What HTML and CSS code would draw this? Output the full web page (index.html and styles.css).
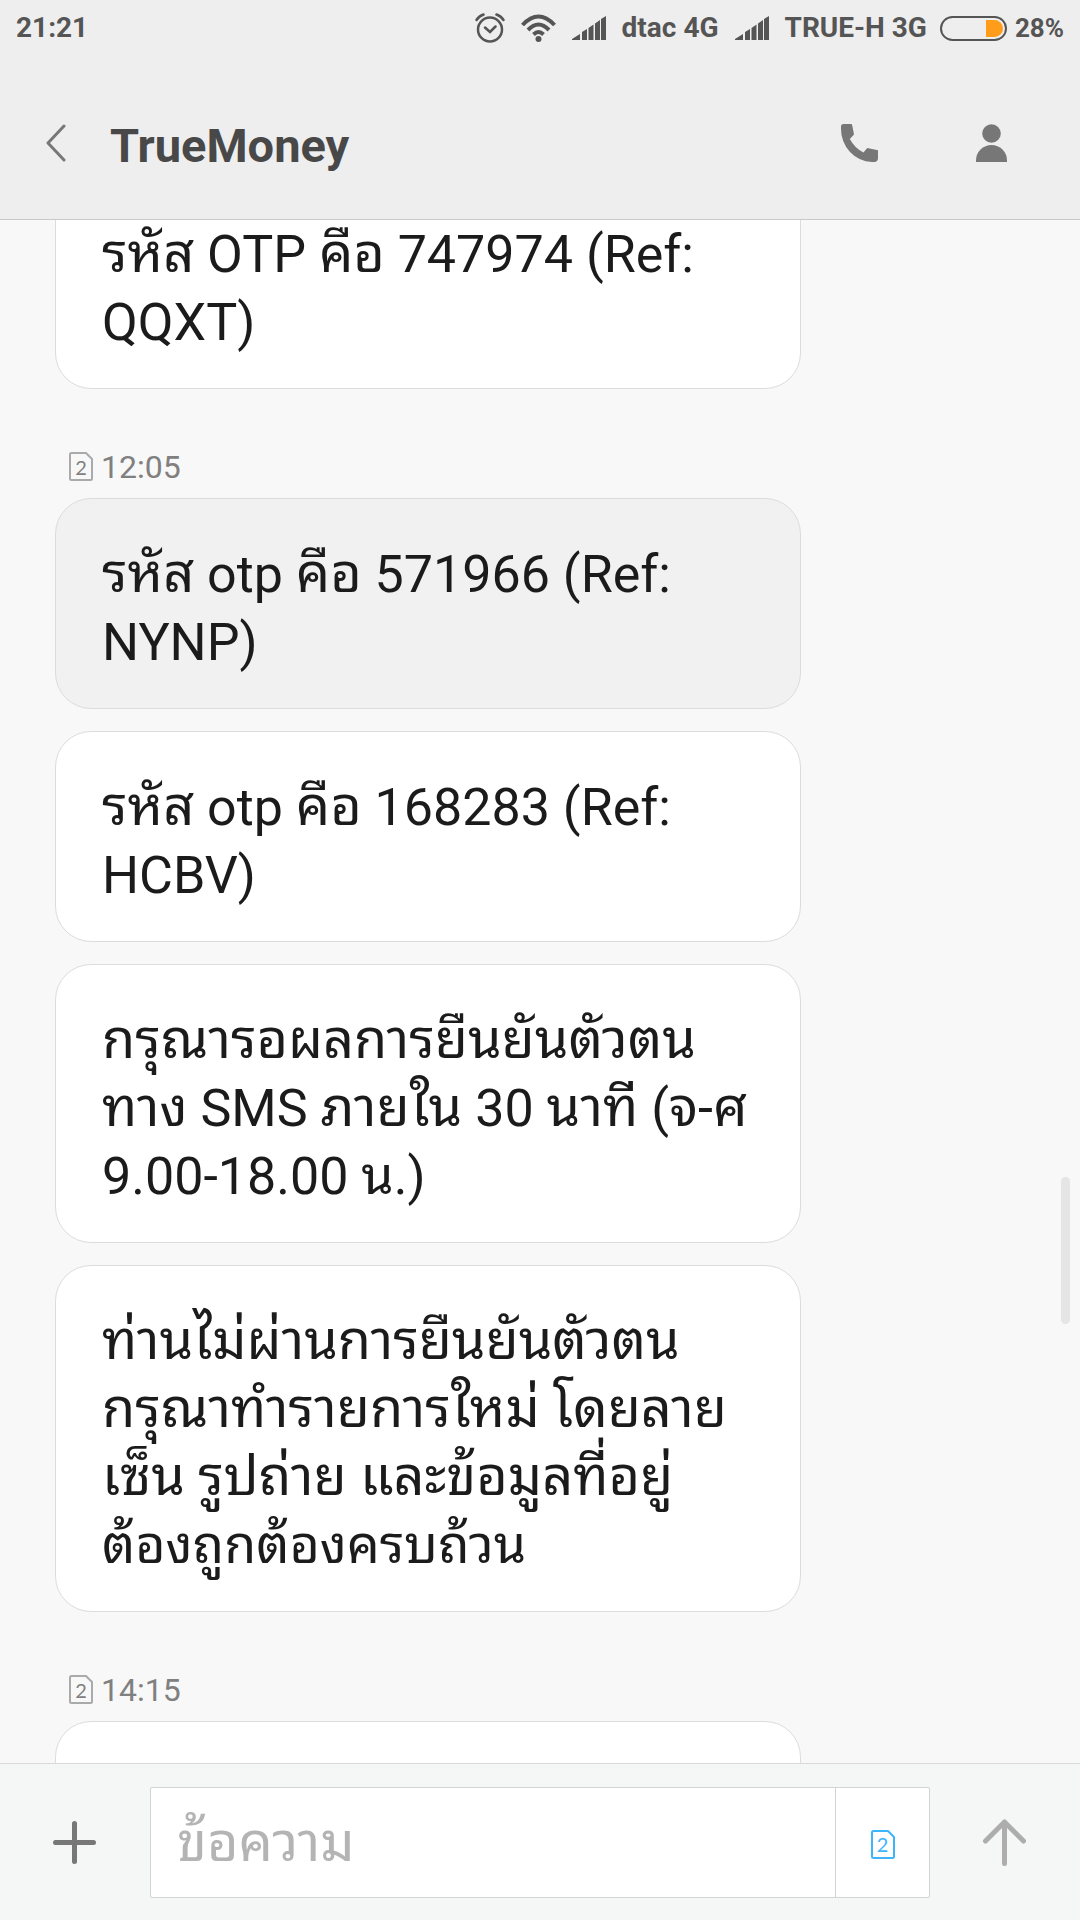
FILE: index.html
```html
<!DOCTYPE html>
<html lang="th">
<head>
<meta charset="utf-8">
<meta name="viewport" content="width=device-width, initial-scale=1">
<title>TrueMoney</title>
<link rel="stylesheet" href="styles.css">
</head>
<body>
<svg class="defs" aria-hidden="true">
  <symbol id="sim" viewBox="0 0 24 29">
    <path d="M2.500 1H17L23 7V26.500Q23 28 21.500 28H2.500Q1 28 1 26.500V2.500Q1 1 2.500 1Z" fill="none" stroke="currentColor" stroke-width="2" stroke-linejoin="round"/>
  </symbol>
  <symbol id="signal" viewBox="0 0 34 24">
    <path d="M0 24V23L8 18V24ZM10 16L15 13V24H10ZM16.500 12L21.500 8.500V24H16.500ZM23 7.500L28 4V24H23ZM29 3L34 0V24H29Z" fill="currentColor"/>
  </symbol>
</svg>
<div class="screen">
  <header class="top">
    <div class="status">
      <time class="clock">21:21</time>
      <svg class="alarm" viewBox="0 0 30 30" fill="none" stroke="currentColor" stroke-width="2.500" stroke-linecap="round">
        <circle cx="15" cy="16.500" r="12"/>
        <path d="M10 14.500L15 19L20.500 13.500M1.500 7Q4 3 8.500 1.500M28.500 7Q26 3 21.500 1.500"/>
      </svg>
      <svg class="wifi" viewBox="0 0 35 28" fill="none" stroke="currentColor" stroke-width="4">
        <path d="M1.500 11Q17.500 -6 33.500 11M7 16Q17.500 5 28 16M12.500 20.500Q17.500 15.500 22.500 20.500"/>
        <circle cx="17.500" cy="25" r="3" fill="currentColor" stroke="none"/>
      </svg>
      <svg class="signal"><use href="#signal"/></svg>
      <span>dtac 4G</span>
      <svg class="signal"><use href="#signal"/></svg>
      <span>TRUE-H 3G</span>
      <svg class="battery" viewBox="0 0 67 25">
        <rect x="1" y="1" width="65" height="23" rx="11.500" fill="none" stroke="currentColor" stroke-width="2"/>
        <path d="M46 4H54.500A8.500 8.500 0 0 1 54.500 21H46Z" fill="#ff9d1b"/>
      </svg>
      <span class="percent">28%</span>
    </div>
    <div class="titlebar">
      <button class="icon-btn back" aria-label="Back">
        <svg width="20" height="38" viewBox="0 0 20 38" fill="none" stroke="currentColor" stroke-width="3" stroke-linecap="round" stroke-linejoin="round"><path d="M18 2L2 19L18 36"/></svg>
      </button>
      <h1 class="title">TrueMoney</h1>
      <button class="icon-btn call" aria-label="Call">
        <svg width="37" height="38" viewBox="0 0 37 38" fill="currentColor"><path d="M2.500 0H10Q11 0 11.200 1.200L13 10.500L8.800 15Q14 24.500 22.500 28.500L26.200 24L37 26.200V34Q37 37 34 38H31Q18 37.500 9 28Q0 18 0 5V2.500Q0 0 2.500 0Z"/></svg>
      </button>
      <button class="icon-btn contact" aria-label="Contact">
        <svg width="31" height="38" viewBox="0 0 31 38" fill="currentColor"><circle cx="15.500" cy="9.500" r="9.300"/><path d="M0 38V36.500A15.500 15.500 0 0 1 31 36.500V38Z"/></svg>
      </button>
    </div>
  </header>

  <main class="thread">
    <div class="messages">
      <p class="bubble"><span class="th">รหัส</span> OTP <span class="th">คือ</span> 747974 (Ref:<br>QQXT)</p>
      <div class="meta"><span class="sim"><svg><use href="#sim"/></svg><b>2</b></span><time>12:05</time></div>
      <p class="bubble pressed"><span class="th">รหัส</span> otp <span class="th">คือ</span> 571966 (Ref:<br>NYNP)</p>
      <p class="bubble"><span class="th">รหัส</span> otp <span class="th">คือ</span> 168283 (Ref:<br>HCBV)</p>
      <p class="bubble"><span class="th">กรุณารอผลการยืนยันตัวตน</span><br><span class="th">ทาง</span> SMS <span class="th">ภายใน</span> 30 <span class="th">นาที</span> (<span class="th">จ-ศ</span><br>9.00-18.00 น.)</p>
      <p class="bubble"><span class="th">ท่านไม่ผ่านการยืนยันตัวตน<br>กรุณาทำรายการใหม่ โดยลาย<br>เซ็น รูปถ่าย และข้อมูลที่อยู่<br></span>ต้องถูกต้องครบถ้วน</p>
      <div class="meta"><span class="sim"><svg><use href="#sim"/></svg><b>2</b></span><time>14:15</time></div>
      <p class="bubble"></p>
    </div>
    <div class="scrollbar"></div>
  </main>

  <form class="composer">
    <button type="button" class="icon-btn add" aria-label="Add">
      <svg width="43" height="43" viewBox="0 0 43 43" stroke="currentColor" stroke-width="5" stroke-linecap="round"><path d="M2.500 21.500H40.500M21.500 2.500V40.500"/></svg>
    </button>
    <div class="field">
      <input class="input" type="text" placeholder="ข้อความ" aria-label="ข้อความ">
      <button type="button" class="sim-btn" aria-label="SIM 2"><span class="sim"><svg><use href="#sim"/></svg><b>2</b></span></button>
    </div>
    <button type="button" class="icon-btn send" aria-label="Send">
      <svg width="43" height="47" viewBox="0 0 43 47" fill="none" stroke="currentColor" stroke-width="5" stroke-linecap="round" stroke-linejoin="round"><path d="M2.500 22L21.500 3L40.500 22M21.500 3V44.500"/></svg>
    </button>
  </form>
</div>
</body>
</html>
```

FILE: styles.css
```css
* {
  box-sizing: border-box;
}

body {
  margin: 0;
  font-family: Roboto, "Noto Sans Thai Looped", "Noto Looped Thai", "Droid Sans Thai", "Noto Sans Thai UI", Loma, Waree, Garuda, sans-serif;
  color: #1b1b1b;
}

button,
input {
  margin: 0;
  padding: 0;
  border: 0;
  background: none;
  font: inherit;
  color: inherit;
}

svg {
  display: block;
}

.defs {
  display: none;
}

.screen {
  display: flex;
  flex-direction: column;
  height: 100vh;
  background: #f8f8f8;
}

/* Header */

.top {
  flex: none;
  background: #eee;
  border-bottom: 1px solid #c8c8c8;
}

.status {
  display: flex;
  align-items: center;
  height: 56px;
  padding: 0 16px;
  font-size: 28px;
  font-weight: 700;
  line-height: 32px;
  color: #555;
  white-space: nowrap;
}

.clock {
  margin-right: auto;
}

.alarm {
  width: 30px;
  height: 30px;
}

.wifi {
  width: 35px;
  height: 28px;
  margin: 0 16px;
}

.signal {
  width: 34px;
  height: 24px;
  margin-right: 16px;
}

.status span + .signal {
  margin-left: 16px;
}

.battery {
  width: 67px;
  height: 25px;
  margin: 0 8px 0 13px;
}

.percent {
  font-size: 26px;
}

.titlebar {
  display: flex;
  align-items: center;
  height: 163px;
  padding: 11px 73px 0 46px;
}

.icon-btn {
  flex: none;
  color: #777;
}

.title {
  flex: 1;
  margin: 6px 0 0 44px;
  font-size: 47px;
  line-height: 56px;
  font-weight: 700;
  color: #484848;
}

.call {
  margin-right: 98px;
}

/* Conversation */

.thread {
  position: relative;
  flex: 1;
  min-height: 0;
  overflow: hidden;
}

.messages {
  display: flex;
  flex-direction: column;
  gap: 22px;
  margin-top: -42px;
  padding: 0 279px 0 55px;
}

.bubble {
  flex: none;
  min-height: 211px;
  margin: 0;
  padding: 42px 24px 31px 46px;
  border: 1px solid #dcdcdc;
  border-radius: 36px;
  background: #fff;
  font-size: 52px;
  line-height: 68px;
  white-space: nowrap;
}

/* Looped Thai runs small beside Roboto */
.th {
  font-size: 54px;
  line-height: 54px;
}

.pressed {
  background: #f1f1f1;
}

.meta {
  display: flex;
  align-items: center;
  gap: 8px;
  height: 65px;
  padding: 46px 0 0 14px;
  font-size: 32px;
  line-height: 20px;
  color: #808080;
}

.sim {
  display: grid;
  width: 24px;
  height: 29px;
  place-items: center;
}

.sim > * {
  grid-area: 1 / 1;
}

.sim > svg {
  width: 24px;
  height: 29px;
}

.sim > b {
  font-family: Lato, sans-serif;
  font-size: 20px;
  font-weight: 400;
  line-height: 28px;
}

.meta svg {
  color: #aaa;
}

.scrollbar {
  position: absolute;
  top: 62%;
  right: 10px;
  width: 9px;
  height: 147px;
  border-radius: 5px;
  background: #e5e5e5;
}

/* Composer */

.composer {
  display: flex;
  flex: none;
  align-items: center;
  padding: 23px 54px 22px 53px;
  border-top: 1px solid #d8dada;
  background: #f5f7f7;
}

.field {
  display: flex;
  flex: 1;
  min-width: 0;
  height: 111px;
  margin: 0 53px 0 54px;
  border: 1px solid #d1d4d4;
  border-radius: 2px;
  background: #fff;
}

.input {
  flex: 1;
  min-width: 0;
  padding: 0 26px;
  font-size: 54px;
  outline: 0;
}

.input::placeholder {
  color: #b4b4b4;
  opacity: 1;
}

.sim-btn {
  display: grid;
  width: 94px;
  padding-top: 3px;
  place-items: center;
  border-left: 1px solid #d1d4d4;
  color: #3db5fb;
}

.send {
  color: #adadad;
}
```
